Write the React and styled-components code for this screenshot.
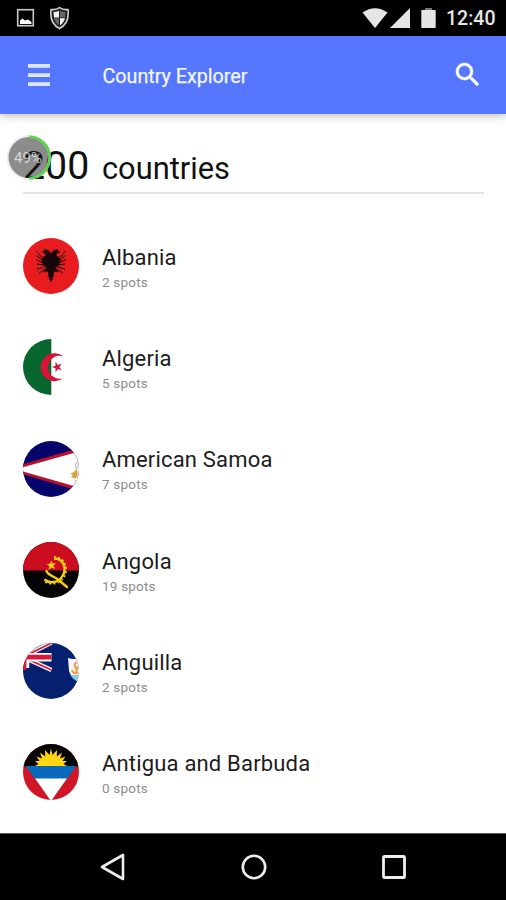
import React from "react";
import styled, { createGlobalStyle } from "styled-components";

const GlobalStyle = createGlobalStyle`
  * {
    box-sizing: border-box;
  }

  body {
    margin: 0;
    background: #fff;
    font-family: Roboto, sans-serif;
  }
`;

const Screen = styled.div`
  height: 900px;
  display: flex;
  flex-direction: column;
  background: #fff;
  overflow: hidden;
`;

const StatusBar = styled.div`
  height: 36px;
  flex: none;
  padding: 0 11px 0 16px;
  display: flex;
  align-items: center;
  justify-content: space-between;
  background: #000;
`;

const StatusIcons = styled.div`
  display: flex;
  align-items: center;
`;

const StatusIcon = styled.svg`
  display: block;
  margin-right: ${props => props.$gap || 0}px;
`;

const Clock = styled.span`
  width: 49px;
  font-size: 19.5px;
  font-weight: 500;
  line-height: 36px;
  padding-top: 2px;
  white-space: nowrap;
  color: #e6e6e6;
`;

const Toolbar = styled.header`
  height: 78px;
  flex: none;
  padding: 0 23px 0 28px;
  display: flex;
  align-items: center;
  background: #5577ff;
  box-shadow: 0 1px 9px rgba(0, 0, 0, 0.32);
`;

const IconButton = styled.button`
  padding: 0;
  border: none;
  background: none;
  display: flex;
  cursor: pointer;
`;

const Title = styled.h1`
  flex: 1;
  margin: 0 0 0 52.5px;
  padding-top: 2px;
  font-size: 19.7px;
  font-weight: 400;
  color: #f4f6ff;
  -webkit-text-stroke: 0.25px #f4f6ff;
`;

const Content = styled.main`
  flex: 1;
  min-height: 0;
  padding: 0 22px 0 23px;
  overflow: hidden;
`;

const Summary = styled.div`
  position: relative;
  height: 79.5px;
  display: flex;
  align-items: baseline;
  padding-top: 27px;
  border-bottom: 2px solid #e2e2e2;
  color: #111;
`;

const Count = styled.span`
  width: 79px;
  font-size: 39.3px;
  line-height: 50px;
`;

const CountLabel = styled.span`
  font-size: 30.8px;
`;

// floating battery bubble, sits over the counter
const Bubble = styled.div`
  position: absolute;
  left: -16px;
  top: 20px;
  width: 46px;
  height: 48px;
  display: flex;
  align-items: center;
  justify-content: center;
  font-size: 15px;
  color: rgba(240, 240, 240, 0.75);
`;

const BubbleRing = styled.svg`
  position: absolute;
  left: 0;
  top: 0;
`;

const BubbleText = styled.span`
  position: relative;
  left: -2px;
`;

const List = styled.ul`
  margin: 0;
  padding: 22px 0 0;
  list-style: none;
`;

const Row = styled.li`
  height: 101.25px;
  display: flex;
  align-items: center;
`;

const FlagCircle = styled.div`
  width: 56px;
  height: 56px;
  flex: none;
  margin-right: 23px;
  border-radius: 50%;
  overflow: hidden;

  svg {
    display: block;
  }
`;

const Name = styled.div`
  padding-top: 2.5px;
  font-size: 22px;
  line-height: 26px;
  letter-spacing: 0.18px;
  color: #1c1c1c;
`;

const Spots = styled.div`
  margin-top: 3px;
  font-size: 13.5px;
  line-height: 16px;
  letter-spacing: 0.2px;
  color: #8c8c8c;
`;

const NavBar = styled.nav`
  height: 67px;
  flex: none;
  padding-left: 1px;
  display: flex;
  justify-content: center;
  align-items: center;
  gap: 112.5px;
  background: #000;
  border-top: 1px solid #555;
`;

const Albania = () => (
  <>
    <rect width="56" height="56" fill="#e81c1f" />
    <g fill="#170708" stroke="#170708" strokeLinejoin="round">
      <path
        strokeWidth="0.6"
        d="M28 16 L26 13 L21 11 L22 13 L19 14 L22 15 L23 18 L20 19 L19 23 L21 28 L24 29 L21 34 L25 33 L26 38 L28 44 L30 38 L31 33 L35 34 L32 29 L35 28 L37 23 L36 19 L33 18 L34 15 L37 14 L34 13 L35 11 L30 13 Z"
      />
      <path
        fill="none"
        strokeWidth="1"
        d="M20 21 L13.5 13 M20 23 L13 17 M20 25 L13 21.5 M21 27 L14 26 M22 29 L14 31 M23 31 L16 35 M36 21 L42.5 13 M36 23 L43 17 M36 25 L43 21.5 M35 27 L42 26 M34 29 L42 31 M33 31 L40 35 M25 38 L31 38 M26 41 L30 41"
      />
    </g>
  </>
);

const Algeria = () => (
  <>
    <rect width="56" height="56" fill="#fff" />
    <rect width="28.3" height="56" fill="#07672f" />
    <path
      fill="#d71437"
      d="M40.3 17.2 A14 14 0 1 0 40.3 39.3 A11.6 11.6 0 1 1 40.3 17.2 Z"
    />
    <path
      fill="#d71437"
      d="M28.8 28 L32.5 26.7 L32.5 22.8 L34.9 25.9 L38.7 24.7 L36.4 28 L38.7 31.3 L34.9 30.1 L32.5 33.2 L32.5 29.3 Z"
    />
  </>
);

const AmericanSamoa = () => (
  <>
    <rect width="56" height="56" fill="#05046b" />
    <path fill="#b8102d" d="M-4 24.5 L56 7 V50 L-4 32 Z" />
    <path fill="#fff" d="M-4 27.3 L56 10.5 V46.5 L-4 29.3 Z" />
    <path
      fill="none"
      stroke="#c4bfc7"
      strokeWidth="1.2"
      d="M54.5 20 L52 25 L54 28 M56 23 L53 29"
    />
    <path
      fill="#d4a336"
      d="M54 28 L51 31 L47 33 L50 34 L48 36 L51 37 L52 38 L54 35 L55 38 L54.5 33 Z"
    />
    <path fill="#d8c8ac" d="M51 39 L53 41 L54 39 Z" />
  </>
);

const Angola = () => (
  <>
    <rect width="56" height="56" fill="#050303" />
    <rect width="56" height="28.5" fill="#cb0d20" />
    <path
      fill="none"
      stroke="#f5cf16"
      strokeWidth="2.4"
      d="M31 16.5 C41 16.5 44 27 39.5 34 C35 41.5 26 41.5 21.5 37.5"
    />
    <path
      fill="none"
      stroke="#f5cf16"
      strokeWidth="1.6"
      strokeDasharray="2 2.3"
      d="M31 14.8 C43 14.8 46 28 41 35.2 C36 43.5 25 43 20.5 38.8"
    />
    <path
      fill="none"
      stroke="#f5cf16"
      strokeWidth="2.4"
      strokeLinecap="round"
      d="M23.5 29 C25 33 31 34.5 35 37.5 L44 45"
    />
    <path
      fill="#f5cf16"
      d="M28.5 18.5 L29.5 21.5 L33 21.2 L30.5 23.5 L32 27 L28.7 25.5 L25.5 28 L26.3 24.3 L23.5 22 L27 21.8 Z"
    />
  </>
);

const Anguilla = () => (
  <>
    <rect width="56" height="56" fill="#04206f" />
    <path stroke="#f2eff6" strokeWidth="4.6" d="M0 14 L28.5 -0.5 M0 14 L28.5 27 M0 14 L-6 34" />
    <path stroke="#d61a38" strokeWidth="1.6" d="M0 14 L28.5 27 M0 14 L28.5 0" />
    <path stroke="#fff" strokeWidth="8.5" d="M0 14.2 H28.5" />
    <path stroke="#fff" strokeWidth="4.5" d="M4 16 V25" />
    <path stroke="#d61a38" strokeWidth="4.8" d="M0 14.2 H28.5 M1 12 V27" />
    <path
      fill="#f6f6f6"
      d="M45 15 Q51 17 56 15 V38 Q48 35 46 28 Z"
    />
    <path fill="#86cdea" d="M47.5 32 H56 V39 Q50 37 47.5 32 Z" />
    <path
      fill="none"
      stroke="#f29a3a"
      strokeWidth="2"
      d="M53.5 19 Q50 22 53 25 M49 27 Q50 31 54 30 M55 24 Q52 27 54.5 30"
    />
  </>
);

const sunRays = "M28 4.5 L29.5 11 L34 6 L33.8 12.5 L39 8.5 L37 14.5 L42.5 12.5 L39.5 17 L44 17 L40.5 20 L45 22.5 H11 L15.5 20 L12 17 L16.5 17 L13.5 12.5 L19 14.5 L17 8.5 L22.2 12.5 L22 6 L26.5 11 Z";

const Antigua = () => (
  <>
    <rect width="56" height="56" fill="#cf1526" />
    <path fill="#050505" d="M0 0 H56 V22.5 H0 Z" />
    <path fill="#ffd514" d={sunRays} />
    <path fill="#0969ba" d="M2.7 22 H53.3 L44 35 H12 Z" />
    <path fill="#fff" d="M12 34.5 H44 L28 57 Z" />
  </>
);

const countries = [
  { name: "Albania", spots: 2, flag: Albania },
  { name: "Algeria", spots: 5, flag: Algeria },
  { name: "American Samoa", spots: 7, flag: AmericanSamoa },
  { name: "Angola", spots: 19, flag: Angola },
  { name: "Anguilla", spots: 2, flag: Anguilla },
  { name: "Antigua and Barbuda", spots: 0, flag: Antigua },
];

const App = () => {
  return (
    <>
      <GlobalStyle />
      <Screen>
        <StatusBar>
          <StatusIcons>
            <StatusIcon width="19" height="20" viewBox="0 0 19 20" $gap={14}>
              <rect x="1.7" y="1.7" width="15.6" height="16" fill="none" stroke="#c9c9c9" strokeWidth="1.6" />
              <path d="M4 16 V12.5 L6.5 10.5 L9 12.5 L12 11.5 L15.5 14 V16 Z" fill="#fff" />
            </StatusIcon>
            <StatusIcon width="21" height="24" viewBox="0 0 21 24">
              <path
                d="M10.5 1.5 C13 3.5 16 3.8 19 3.5 C20 12 17.5 19 10.5 22.5 C3.5 19 1 12 2 3.5 C5 3.8 8 3.5 10.5 1.5 Z"
                fill="#222"
                stroke="#d0d0d0"
                strokeWidth="1.6"
              />
              <path d="M4.5 6 Q8 6 10 4.8 V11.5 H5 Z M11 12.3 H16 Q14.8 17 11 19.3 Z" fill="#f2f2f2" />
              <path d="M11 5 Q13.5 6 16.5 6 L16 11.5 H11 Z M5 12.3 H10 V19 Q6 17 5 12.3 Z" fill="#666" />
            </StatusIcon>
          </StatusIcons>
          <StatusIcons>
            <StatusIcon width="26" height="20" viewBox="0 0 26 20" $gap={2}>
              <path d="M0.5 4.5 Q13 -4 25.5 4.5 L13 20 Z" fill="#e6e6e6" />
            </StatusIcon>
            <StatusIcon width="20" height="20" viewBox="0 0 20 20" $gap={11}>
              <path d="M20 0 V20 H0 Z" fill="#e6e6e6" />
            </StatusIcon>
            <StatusIcon width="15" height="20" viewBox="0 0 15 20" $gap={10}>
              <rect x="4" width="7" height="2" fill="#777" />
              <rect x="0.3" y="2" width="14.4" height="18" rx="0.8" fill="#e6e6e6" />
            </StatusIcon>
            <Clock>12:40</Clock>
          </StatusIcons>
        </StatusBar>

        <Toolbar>
          <IconButton aria-label="Menu">
            <svg width="22" height="22" viewBox="0 0 22 22" fill="#dde4ff">
              <rect width="22" height="3.8" />
              <rect y="9.2" width="22" height="3.8" />
              <rect y="18.2" width="22" height="3.8" />
            </svg>
          </IconButton>
          <Title>Country Explorer</Title>
          <IconButton aria-label="Search">
            <svg width="31.5" height="31.5" viewBox="0 0 24 24" fill="#fff" stroke="#fff" strokeWidth="0.4">
              <path d="M15.5 14h-.79l-.28-.27A6.471 6.471 0 0 0 16 9.5 6.5 6.5 0 1 0 9.5 16c1.61 0 3.09-.59 4.23-1.57l.27.28v.79l5 4.99L20.49 19l-4.99-5zm-6 0C7.01 14 5 11.99 5 9.5S7.01 5 9.5 5 14 7.01 14 9.5 11.99 14 9.5 14z" />
            </svg>
          </IconButton>
        </Toolbar>

        <Content>
          <Summary>
            <Count>200</Count>
            <CountLabel>countries</CountLabel>
            <Bubble>
              <BubbleRing width="46" height="48" viewBox="0 0 46 48">
                <path d="M22 45 A21.5 21.5 0 0 1 22 2" fill="none" stroke="#eee" strokeWidth="2" />
                <circle cx="22" cy="23.5" r="20.5" fill="rgba(25, 25, 25, 0.5)" />
                <path d="M22 2.8 A20.7 20.7 0 0 1 22 44.2" fill="none" stroke="#62cf55" strokeWidth="3" />
              </BubbleRing>
              <BubbleText>49%</BubbleText>
            </Bubble>
          </Summary>
          <List>
            {countries.map(({ name, spots, flag: Flag }) => (
              <Row key={name}>
                <FlagCircle>
                  <svg width="56" height="56" viewBox="0 0 56 56">
                    <Flag />
                  </svg>
                </FlagCircle>
                <div>
                  <Name>{name}</Name>
                  <Spots>{spots} spots</Spots>
                </div>
              </Row>
            ))}
          </List>
        </Content>

        <NavBar>
          <IconButton aria-label="Back">
            <svg width="28" height="28" viewBox="0 0 28 28">
              <path d="M3 14 L24 2 V26 Z" fill="none" stroke="#eee" strokeWidth="2.6" strokeLinejoin="round" />
            </svg>
          </IconButton>
          <IconButton aria-label="Home">
            <svg width="28" height="28" viewBox="0 0 28 28">
              <circle cx="14" cy="14" r="11.2" fill="none" stroke="#eee" strokeWidth="2.6" />
            </svg>
          </IconButton>
          <IconButton aria-label="Recents">
            <svg width="28" height="28" viewBox="0 0 28 28">
              <rect x="3.5" y="3.5" width="21" height="21" rx="0.8" fill="none" stroke="#eee" strokeWidth="2.8" />
            </svg>
          </IconButton>
        </NavBar>
      </Screen>
    </>
  );
};

export default App;
